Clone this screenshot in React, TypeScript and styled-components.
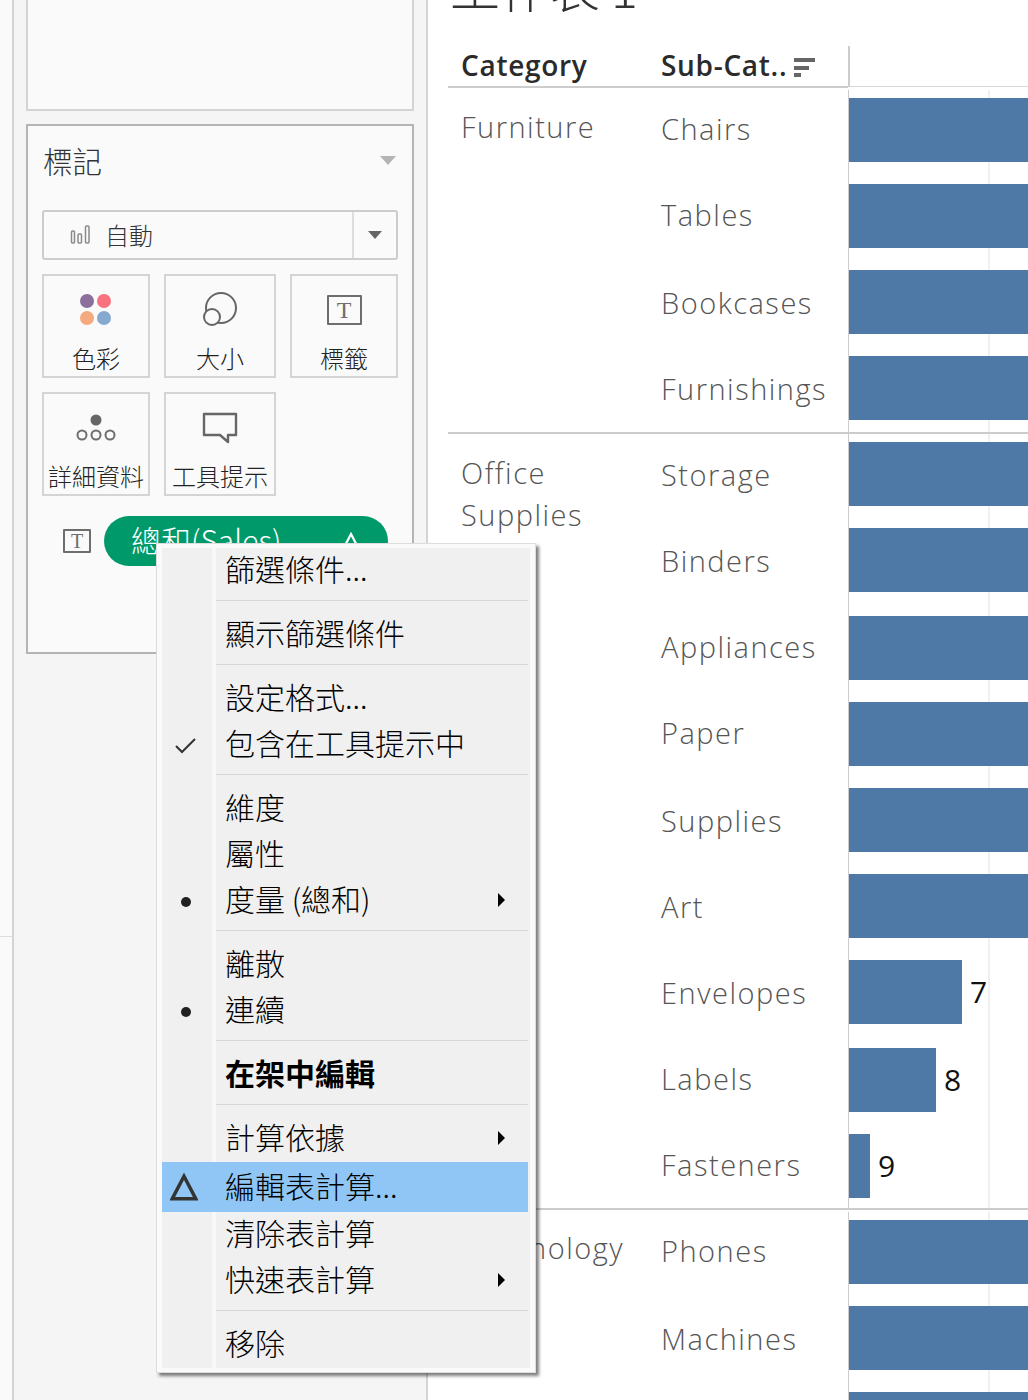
import React from 'react';
import styled, { createGlobalStyle } from 'styled-components';

const CJK = `"Noto Sans CJK TC", "Noto Sans CJK SC", sans-serif`;
const LATIN = `"Open Sans", "Noto Sans CJK TC", sans-serif`;

const GlobalStyle = createGlobalStyle`
    html, body {
        margin: 0;
        padding: 0;
        background: #ffffff;
    }
    * {
        box-sizing: border-box;
    }
`;

const Page = styled.div`
    position: relative;
    display: flex;
    width: 1028px;
    height: 1400px;
    overflow: hidden;
    font-family: ${CJK};
`;

const Gutter = styled.div`
    width: 12px;
    padding-top: 936px;
    background: #fafafa;
`;
const GutterRule = styled.div`
    height: 1px;
    background: #dddddd;
`;

const Sidebar = styled.aside`
    width: 416px;
    display: flex;
    flex-direction: column;
    gap: 13px;
    padding: 0 12px;
    background: #f5f5f5;
    border-left: 2px solid #d4d4d4;
    border-right: 2px solid #d4d4d4;
`;
const EmptyCard = styled.div`
    height: 111px;
    background: #fafafa;
    border: 2px solid #d4d4d4;
    border-top: none;
`;
const MarksCard = styled.section`
    height: 530px;
    padding: 0 14px;
    background: #fafafa;
    border: 2px solid #b4b4b4;
`;
const MarksHead = styled.div`
    height: 84px;
    display: flex;
    align-items: center;
    justify-content: space-between;
    padding: 0 2px 0 0;
    font-size: 29.5px;
    font-weight: 300;
    color: #333333;
`;
const HeadTitle = styled.span`
    margin-top: -16px;
    margin-left: 1px;
`;
const Caret = styled.span<{ $color: string; $w: number; $h: number }>`
    width: 0;
    height: 0;
    border-left: ${p => p.$w / 2}px solid transparent;
    border-right: ${p => p.$w / 2}px solid transparent;
    border-top: ${p => p.$h}px solid ${p => p.$color};
`;
const HeadCaret = styled(Caret)`
    margin-top: -15px;
`;
const MarkType = styled.div`
    height: 50px;
    display: flex;
    align-items: center;
    border: 2px solid #cccccc;
    border-radius: 3px;
`;
const MarkTypeValue = styled.div`
    flex: 1;
    display: flex;
    align-items: center;
    gap: 15px;
    padding-left: 26px;
    font-size: 24px;
    font-weight: 300;
    color: #333333;
`;
const MarkTypeName = styled.span`
    margin-top: -2px;
`;
const MarkTypeToggle = styled.div`
    width: 44px;
    height: 100%;
    display: flex;
    align-items: center;
    justify-content: center;
    border-left: 2px solid #dddddd;
`;
const MarkGrid = styled.div`
    display: grid;
    grid-template-columns: 108px 112px 108px;
    grid-auto-rows: 104px;
    gap: 14px;
    margin-top: 14px;
`;
const MarkButton = styled.div`
    display: grid;
    grid-template-rows: 67px 33px;
    justify-items: center;
    align-items: center;
    border: 2px solid #d4d4d4;
    font-size: 24px;
    font-weight: 300;
    line-height: 34px;
    color: #222222;
    white-space: nowrap;
`;
const MarkButtonLabel = styled.span`
    margin-top: -3px;
`;
const LabelGlyph = styled.span<{ $w: number; $h: number; $size: number }>`
    width: ${p => p.$w}px;
    height: ${p => p.$h}px;
    display: flex;
    align-items: center;
    justify-content: center;
    border: 2px solid #6e6e6e;
    border-radius: 1px;
    font-family: 'Liberation Serif', serif;
    font-size: ${p => p.$size}px;
    line-height: 1;
    color: #6e6e6e;
`;
const PillRow = styled.div`
    display: flex;
    align-items: center;
    gap: 13px;
    margin-top: 20px;
    padding-left: 21px;
`;
const Pill = styled.div`
    width: 284px;
    height: 50px;
    display: flex;
    align-items: center;
    justify-content: space-between;
    padding: 0 28px 0 27px;
    border-radius: 25px;
    background: #009a6a;
    color: #ffffff;
    font-size: 30px;
    font-weight: 300;
    white-space: nowrap;
`;
const PillText = styled.span`
    margin-top: -4px;
`;

const Main = styled.main`
    flex: 1;
    min-width: 0;
    padding-left: 20px;
    background: #ffffff;
`;
const TitleClip = styled.div`
    height: 46px;
    overflow: hidden;
`;
const Title = styled.h1`
    margin: -50px 0 0 2px;
    font-size: 50px;
    font-weight: 300;
    line-height: 72px;
    color: #333333;
    white-space: nowrap;
`;
const HeadRow = styled.div`
    display: flex;
    height: 42px;
`;
const HeadCell = styled.div<{ $w: number }>`
    width: ${p => p.$w}px;
    display: flex;
    align-items: center;
    padding: 0 0 2px 13px;
    border-bottom: 2px solid #cccccc;
    font-family: ${LATIN};
    font-size: 28px;
    font-weight: 600;
    letter-spacing: 0.7px;
    color: #2b2b2b;
    white-space: nowrap;
`;
const SortIcon = styled.svg`
    margin-left: 7px;
    margin-top: 6px;
    flex: none;
`;
const HeadAxis = styled.div`
    flex: 1;
    border-left: 2px solid #cccccc;
    border-bottom: 1px solid #d8d8d8;
    margin-bottom: 1px;
`;
const Group = styled.section<{ $rule: boolean; $pad: number }>`
    display: flex;
    padding-top: ${p => p.$pad}px;
    border-bottom: ${p => (p.$rule ? '2px solid #cccccc' : 'none')};
`;
const BodyText = styled.div<{ $top: number }>`
    width: 200px;
    flex: none;
    padding: ${p => p.$top}px 0 0 13px;
    font-family: ${LATIN};
    font-size: 29px;
    font-weight: 300;
    letter-spacing: 1.5px;
    line-height: 42px;
    color: #555555;
`;
const Rows = styled.div`
    flex: 1;
    min-width: 0;
`;
const Row = styled.div<{ $h: number }>`
    display: flex;
    height: ${p => p.$h}px;
`;
const BarCell = styled.div`
    flex: 1;
    display: flex;
    align-items: flex-start;
    padding-top: 8px;
    border-left: 1px solid #cccccc;
    background: linear-gradient(#f0f0f0, #f0f0f0) 139px 0 / 2px 100% no-repeat;
`;
const Bar = styled.div<{ $w?: number }>`
    height: 64px;
    width: ${p => (p.$w ? `${p.$w}px` : '100%')};
    flex: none;
    background: #4e78a6;
`;
const BarValue = styled.span`
    margin: 11px 0 0 8px;
    font-family: ${LATIN};
    font-size: 30px;
    line-height: 42px;
    color: #111111;
`;

const Menu = styled.div`
    position: absolute;
    left: 156px;
    top: 543px;
    width: 380px;
    height: 830px;
    padding: 4px 5px 4px 5px;
    background: #fafafa;
    border: 1px solid #dddddd;
    box-shadow: 3px 3px 3px rgba(0, 0, 0, 0.5);
`;
const MenuBody = styled.div`
    height: 100%;
    display: flex;
    flex-direction: column;
    background: linear-gradient(
        to right,
        #f0f0f0 50px,
        #f8f8f8 50px,
        #f8f8f8 54px,
        #f0f0f0 54px
    );
`;
const MenuItem = styled.div<{ $hot?: boolean; $bold?: boolean; $first?: boolean }>`
    flex: none;
    height: ${p => (p.$hot ? '50px' : '46px')};
    margin: ${p => (p.$hot ? '1px 2px -1px 0' : p.$first ? '-1px 2px 0 0' : '0 2px 0 0')};
    display: flex;
    align-items: center;
    padding-right: 23px;
    background: ${p => (p.$hot ? '#90c6f5' : 'transparent')};
    font-size: 30px;
    font-weight: ${p => (p.$bold ? 700 : 300)};
    line-height: 46px;
    color: #000000;
    white-space: nowrap;
`;
const MenuMark = styled.span`
    width: 48px;
    flex: none;
    display: flex;
    justify-content: center;
    margin-top: 4px;
`;
const MenuDelta = styled.span`
    display: flex;
    margin: -4px 4px 0 0;
`;
const MenuLabel = styled.span`
    flex: 1;
    margin: -4px 0 0 15px;
`;
const MenuRule = styled.div`
    flex: none;
    height: 1px;
    margin: 7px 2px 10px 54px;
    background: #d6d6d6;
`;
const Dot = styled.span`
    width: 10px;
    height: 10px;
    border-radius: 50%;
    background: #222222;
`;
const SubArrow = styled.span`
    width: 0;
    height: 0;
    border-top: 7px solid transparent;
    border-bottom: 7px solid transparent;
    border-left: 7px solid #000000;
`;

const MENU: any[][] = [
    [{ text: '篩選條件...' }],
    [{ text: '顯示篩選條件' }],
    [{ text: '設定格式...' }, { text: '包含在工具提示中', mark: 'check' }],
    [{ text: '維度' }, { text: '屬性' }, { text: '度量 (總和)', mark: 'dot', sub: true }],
    [{ text: '離散' }, { text: '連續', mark: 'dot' }],
    [{ text: '在架中編輯', bold: true }],
    [
        { text: '計算依據', sub: true },
        { text: '編輯表計算...', mark: 'delta', hot: true },
        { text: '清除表計算' },
        { text: '快速表計算', sub: true },
    ],
    [{ text: '移除' }],
];

const GROUPS = [
    {
        name: 'Furniture',
        top: 16,
        pad: 2,
        rows: [
            { name: 'Chairs', h: 86, top: 18 },
            { name: 'Tables', h: 86, top: 18 },
            { name: 'Bookcases', h: 86, top: 20 },
            { name: 'Furnishings', h: 84, top: 20 },
        ],
    },
    {
        name: 'Office Supplies',
        top: 18,
        pad: 0,
        rows: [
            { name: 'Storage', h: 86, top: 20 },
            { name: 'Binders', h: 88, top: 20 },
            { name: 'Appliances', h: 86, top: 18 },
            { name: 'Paper', h: 86, top: 18 },
            { name: 'Supplies', h: 86, top: 20 },
            { name: 'Art', h: 86, top: 20 },
            { name: 'Envelopes', h: 88, top: 20, bar: 113, value: 7 },
            { name: 'Labels', h: 86, top: 18, bar: 87, value: 8 },
            { name: 'Fasteners', h: 82, top: 18, bar: 21, value: 9 },
        ],
    },
    {
        name: 'Technology',
        top: 15,
        pad: 2,
        rows: [
            { name: 'Phones', h: 86, top: 18 },
            { name: 'Machines', h: 86, top: 20 },
            { name: '', h: 86, top: 20 },
        ],
    },
];

const AutoIcon = () => (
    <svg width="20" height="20" viewBox="0 0 20 20" fill="none" stroke="#8a8a8a" strokeWidth="1.5">
        <rect x="1.5" y="6" width="3" height="12" rx="1" />
        <rect x="8" y="9" width="3.5" height="9" rx="1" />
        <rect x="15.5" y="1" width="3.5" height="17" rx="1" />
    </svg>
);
const ColorIcon = () => (
    <svg width="34" height="34" viewBox="0 0 34 34">
        <circle cx="8" cy="8" r="7" fill="#8b6f9c" />
        <circle cx="25" cy="8" r="7" fill="#f7717f" />
        <circle cx="8" cy="25" r="7" fill="#f4a97f" />
        <circle cx="25" cy="25" r="7" fill="#86a9cf" />
    </svg>
);
const SizeIcon = () => (
    <svg width="36" height="36" viewBox="0 0 36 36" fill="none" stroke="#666666" strokeWidth="2">
        <circle cx="19" cy="16" r="15" />
        <circle cx="10" cy="25" r="8" fill="#fafafa" />
    </svg>
);
const DetailIcon = () => (
    <svg width="42" height="36" viewBox="0 0 42 36">
        <circle cx="21" cy="10" r="5.5" fill="#666666" />
        <g fill="none" stroke="#6e6e6e" strokeWidth="2">
            <circle cx="7" cy="25" r="4.5" />
            <circle cx="21" cy="25" r="4.5" />
            <circle cx="35" cy="25" r="4.5" />
        </g>
    </svg>
);
const TooltipIcon = () => (
    <svg width="36" height="32" viewBox="0 0 36 32" fill="none" stroke="#666666" strokeWidth="2.4" strokeLinejoin="round">
        <path d="M2 2H34V23H26V30L18 23H2Z" />
    </svg>
);
const DeltaIcon = ({ color, size }: { color: string; size: number }) => (
    <svg width={size} height={size} viewBox="0 0 26 26" fill="none" stroke={color} strokeWidth="3.2" strokeLinejoin="miter">
        <path d="M13 3L24 24H2Z" />
    </svg>
);
const CheckIcon = () => (
    <svg width="22" height="16" viewBox="0 0 22 16" fill="none" stroke="#333333" strokeWidth="2">
        <path d="M1 8L7 14L20 1" />
    </svg>
);
const Sort = () => (
    <SortIcon width="22" height="20" viewBox="0 0 22 20" fill="#666666">
        <rect x="0" y="0" width="21" height="4" />
        <rect x="0" y="8" width="15" height="4" />
        <rect x="0" y="15" width="7" height="4" />
    </SortIcon>
);

const renderMark = (mark?: string) => {
    if (mark === 'check') return <CheckIcon />;
    if (mark === 'dot') return <Dot />;
    if (mark === 'delta') {
        return (
            <MenuDelta>
                <DeltaIcon color="#333333" size={28} />
            </MenuDelta>
        );
    }
    return null;
};

const MARK_BUTTONS = [
    { label: '色彩', Icon: ColorIcon },
    { label: '大小', Icon: SizeIcon },
    { label: '標籤', Icon: () => <LabelGlyph $w={35} $h={30} $size={24}>T</LabelGlyph> },
    { label: '詳細資料', Icon: DetailIcon },
    { label: '工具提示', Icon: TooltipIcon },
];

export default function App() {
    return (
        <Page>
            <GlobalStyle />
            <Gutter>
                <GutterRule />
            </Gutter>
            <Sidebar>
                <EmptyCard />
                <MarksCard>
                    <MarksHead>
                        <HeadTitle>標記</HeadTitle>
                        <HeadCaret $color="#b4b4b4" $w={16} $h={9} />
                    </MarksHead>
                    <MarkType>
                        <MarkTypeValue>
                            <AutoIcon />
                            <MarkTypeName>自動</MarkTypeName>
                        </MarkTypeValue>
                        <MarkTypeToggle>
                            <Caret $color="#666666" $w={14} $h={8} />
                        </MarkTypeToggle>
                    </MarkType>
                    <MarkGrid>
                        {MARK_BUTTONS.map(({ label, Icon }) => (
                            <MarkButton key={label}>
                                <Icon />
                                <MarkButtonLabel>{label}</MarkButtonLabel>
                            </MarkButton>
                        ))}
                    </MarkGrid>
                    <PillRow>
                        <LabelGlyph $w={28} $h={24} $size={20}>T</LabelGlyph>
                        <Pill>
                            <PillText>總和(Sales)</PillText>
                            <DeltaIcon color="#ffffff" size={18} />
                        </Pill>
                    </PillRow>
                </MarksCard>
            </Sidebar>
            <Main>
                <TitleClip>
                    <Title>工作表 1</Title>
                </TitleClip>
                <HeadRow>
                    <HeadCell $w={200}>Category</HeadCell>
                    <HeadCell $w={200}>
                        Sub-Cat..
                        <Sort />
                    </HeadCell>
                    <HeadAxis />
                </HeadRow>
                {GROUPS.map((group, i) => (
                    <Group key={group.name} $rule={i < GROUPS.length - 1} $pad={group.pad}>
                        <BodyText $top={group.top}>{group.name}</BodyText>
                        <Rows>
                            {group.rows.map((row: any, r: number) => (
                                <Row key={r} $h={row.h}>
                                    <BodyText $top={row.top}>{row.name}</BodyText>
                                    <BarCell>
                                        <Bar $w={row.bar} />
                                        {row.value && <BarValue>{row.value}</BarValue>}
                                    </BarCell>
                                </Row>
                            ))}
                        </Rows>
                    </Group>
                ))}
            </Main>
            <Menu>
                <MenuBody>
                    {MENU.map((section, s) => (
                        <React.Fragment key={s}>
                            {s > 0 && <MenuRule />}
                            {section.map((item, j) => (
                                <MenuItem key={item.text} $hot={item.hot} $bold={item.bold} $first={s === 0 && j === 0}>
                                    <MenuMark>{renderMark(item.mark)}</MenuMark>
                                    <MenuLabel>{item.text}</MenuLabel>
                                    {item.sub && <SubArrow />}
                                </MenuItem>
                            ))}
                        </React.Fragment>
                    ))}
                </MenuBody>
            </Menu>
        </Page>
    );
}
